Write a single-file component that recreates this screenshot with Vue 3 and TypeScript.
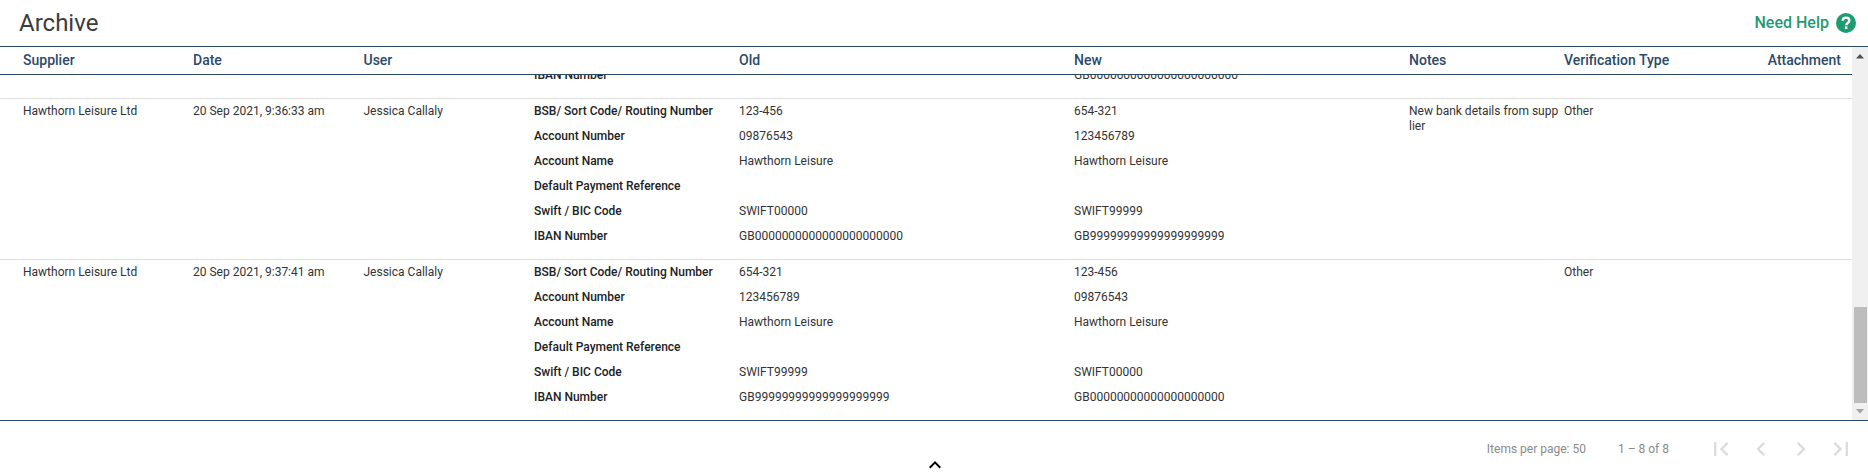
<script setup lang="ts">
import { onMounted, ref } from 'vue'

interface ArchiveRow {
  id: number
  date: string
  notes: string
  old: string[]
  next: string[]
}

const LABELS = [
  'BSB/ Sort Code/ Routing Number',
  'Account Number',
  'Account Name',
  'Default Payment Reference',
  'Swift / BIC Code',
  'IBAN Number',
]

const BLANK = ['', '', '', '', '', '']
const BANK_A = ['123-456', '09876543', 'Hawthorn Leisure', '', 'SWIFT00000', 'GB0000000000000000000000']
const BANK_B = ['654-321', '123456789', 'Hawthorn Leisure', '', 'SWIFT99999', 'GB99999999999999999999']
const BANK_A_SHORT = ['123-456', '09876543', 'Hawthorn Leisure', '', 'SWIFT00000', 'GB00000000000000000000']

const rows: ArchiveRow[] = [
  { id: 1, date: '20 Sep 2021, 9:12:05 am', notes: '', old: BLANK, next: BANK_A },
  { id: 2, date: '20 Sep 2021, 9:14:48 am', notes: '', old: BANK_A, next: BANK_B },
  { id: 3, date: '20 Sep 2021, 9:18:20 am', notes: '', old: BANK_B, next: BANK_A },
  { id: 4, date: '20 Sep 2021, 9:21:37 am', notes: '', old: BLANK, next: BANK_A },
  { id: 5, date: '20 Sep 2021, 9:25:11 am', notes: '', old: BANK_A, next: BANK_B },
  { id: 6, date: '20 Sep 2021, 9:31:02 am', notes: '', old: BLANK, next: BANK_A },
  { id: 7, date: '20 Sep 2021, 9:36:33 am', notes: 'New bank details from supplier', old: BANK_A, next: BANK_B },
  { id: 8, date: '20 Sep 2021, 9:37:41 am', notes: '', old: BANK_B, next: BANK_A_SHORT },
]

const scroller = ref<HTMLElement | null>(null)

onMounted(() => {
  // the archive opens scrolled to the newest entries
  if (scroller.value) scroller.value.scrollTop = scroller.value.scrollHeight
})
</script>

<template>
  <div class="page">
    <header class="title-bar">
      <h1>Archive</h1>
      <a class="help">
        Need Help
        <svg width="20" height="20" viewBox="0 0 20 20">
          <circle cx="10" cy="10" r="10" fill="#1f9b74" />
          <path d="M6.7 7.8c0-2 1.4-3.2 3.4-3.2 1.9 0 3.2 1.1 3.2 2.8 0 1.2-.6 1.8-1.6 2.5-1 .7-1.4 1.2-1.4 2.4" fill="none" stroke="#fff" stroke-width="2.4" />
          <rect x="8.9" y="13.4" width="2.5" height="2.5" fill="#fff" />
        </svg>
      </a>
    </header>

    <div class="table-wrap">
      <div ref="scroller" class="scroller">
        <div class="row head">
          <div>Supplier</div>
          <div>Date</div>
          <div>User</div>
          <div></div>
          <div>Old</div>
          <div>New</div>
          <div>Notes</div>
          <div>Verification Type</div>
          <div class="right">Attachment</div>
        </div>

        <div v-for="row in rows" :key="row.id" class="row item">
          <div>Hawthorn Leisure Ltd</div>
          <div>{{ row.date }}</div>
          <div>Jessica Callaly</div>
          <div class="changes">
            <template v-for="(label, i) in LABELS" :key="label">
              <div class="label">{{ label }}</div>
              <div>{{ row.old[i] }}</div>
              <div>{{ row.next[i] }}</div>
            </template>
          </div>
          <div class="notes">{{ row.notes }}</div>
          <div>Other</div>
          <div></div>
        </div>
      </div>

      <div class="scrollbar">
        <svg class="arrow" viewBox="0 0 16 17"><path d="M8 7l4 4.5H4z" fill="#505050" /></svg>
        <div class="track"><div class="thumb"></div></div>
        <svg class="arrow" viewBox="0 0 16 17"><path d="M4 6h8l-4 4.5z" fill="#a3a3a3" /></svg>
      </div>
    </div>

    <footer class="paginator">
      <span>Items per page: 50</span>
      <span class="range">1 – 8 of 8</span>
      <div class="pager-buttons">
        <svg viewBox="0 0 24 24"><path d="M18.41 16.59L13.82 12l4.59-4.59L17 6l-6 6 6 6zM6 6h2v12H6z" /></svg>
        <svg viewBox="0 0 24 24"><path d="M15.41 7.41L14 6l-6 6 6 6 1.41-1.41L10.83 12z" /></svg>
        <svg viewBox="0 0 24 24"><path d="M8.59 16.59L10 18l6-6-6-6-1.41 1.41L13.17 12z" /></svg>
        <svg viewBox="0 0 24 24"><path d="M5.59 7.41L10.18 12l-4.59 4.59L7 18l6-6-6-6zM16 6h2v12h-2z" /></svg>
      </div>
    </footer>

    <div class="collapse">
      <svg width="24" height="24" viewBox="0 0 24 24"><path d="M7.41 15.41L12 10.83l4.59 4.58L18 14l-6-6-6 6z" /></svg>
    </div>
  </div>
</template>

<style scoped>
.page {
  position: relative;
  height: 476px;
  overflow: hidden;
  background: #fff;
  font-family: Roboto, "Liberation Sans", sans-serif;
  font-size: 12px;
  color: #333;
}

.title-bar {
  height: 46px;
  display: flex;
  align-items: center;
  justify-content: space-between;
  padding: 0 12px 1px 19px;
  box-sizing: border-box;
}

h1 {
  margin: 0;
  font-size: 24px;
  font-weight: 400;
  color: #3c3c3c;
}

.help {
  display: flex;
  align-items: center;
  gap: 7px;
  font-size: 16px;
  font-weight: 500;
  color: #1f9b74;
}

.table-wrap {
  position: relative;
  height: 375px;
  box-sizing: border-box;
  border-top: 1px solid #2c4b66;
  border-bottom: 1px solid #2c4b66;
}

.scroller {
  height: 100%;
  padding-right: 16px;
  overflow-y: scroll;
  scrollbar-width: none;
}

.scrollbar {
  position: absolute;
  top: 0;
  right: 0;
  bottom: 0;
  width: 16px;
  display: flex;
  flex-direction: column;
  background: #f0f0f0;
}

.arrow {
  flex: none;
  width: 16px;
  height: 17px;
}

.track {
  flex: 1;
  display: flex;
  flex-direction: column;
  justify-content: flex-end;
}

.thumb {
  height: 96px;
  margin: 0 1px 0 2px;
  background: #bdbdbd;
}

.row {
  display: grid;
  grid-template-columns: 170px 170.5px 170.5px 205px 335px 335px 155px 1fr auto;
  padding: 0 11px 0 23px;
}

.head {
  position: sticky;
  top: 0;
  z-index: 1;
  height: 28px;
  box-sizing: border-box;
  padding-bottom: 1px;
  align-items: center;
  background: #fff;
  border-bottom: 1px solid #2c4b66;
  font-size: 14px;
  font-weight: 500;
  color: #2c4a68;
}

.right {
  text-align: right;
}

.item {
  box-sizing: border-box;
  height: 161px;
  padding-top: 5px;
  border-bottom: 1px solid #dedede;
  line-height: 15px;
}

.item:last-child {
  height: 160px;
  border-bottom: 0;
}

.changes {
  grid-column: span 3;
  display: grid;
  grid-template-columns: subgrid;
  grid-auto-rows: 25px;
}

.label {
  font-weight: 500;
  color: #222;
}

.notes {
  padding-right: 4px;
  word-break: break-all;
}

.paginator {
  height: 55px;
  display: flex;
  align-items: center;
  justify-content: flex-end;
  padding-right: 7px;
  color: #8a8a8a;
}

.range {
  margin-left: 32px;
  margin-right: 32px;
}

.pager-buttons {
  display: flex;
}

.pager-buttons svg {
  width: 28px;
  height: 28px;
  margin: 0 6px;
  fill: #dcdcdc;
}

.collapse {
  position: absolute;
  left: 923px;
  top: 453px;
  height: 24px;
}
</style>

<style>
body {
  background: #fff;
  overflow: hidden;
}
</style>
